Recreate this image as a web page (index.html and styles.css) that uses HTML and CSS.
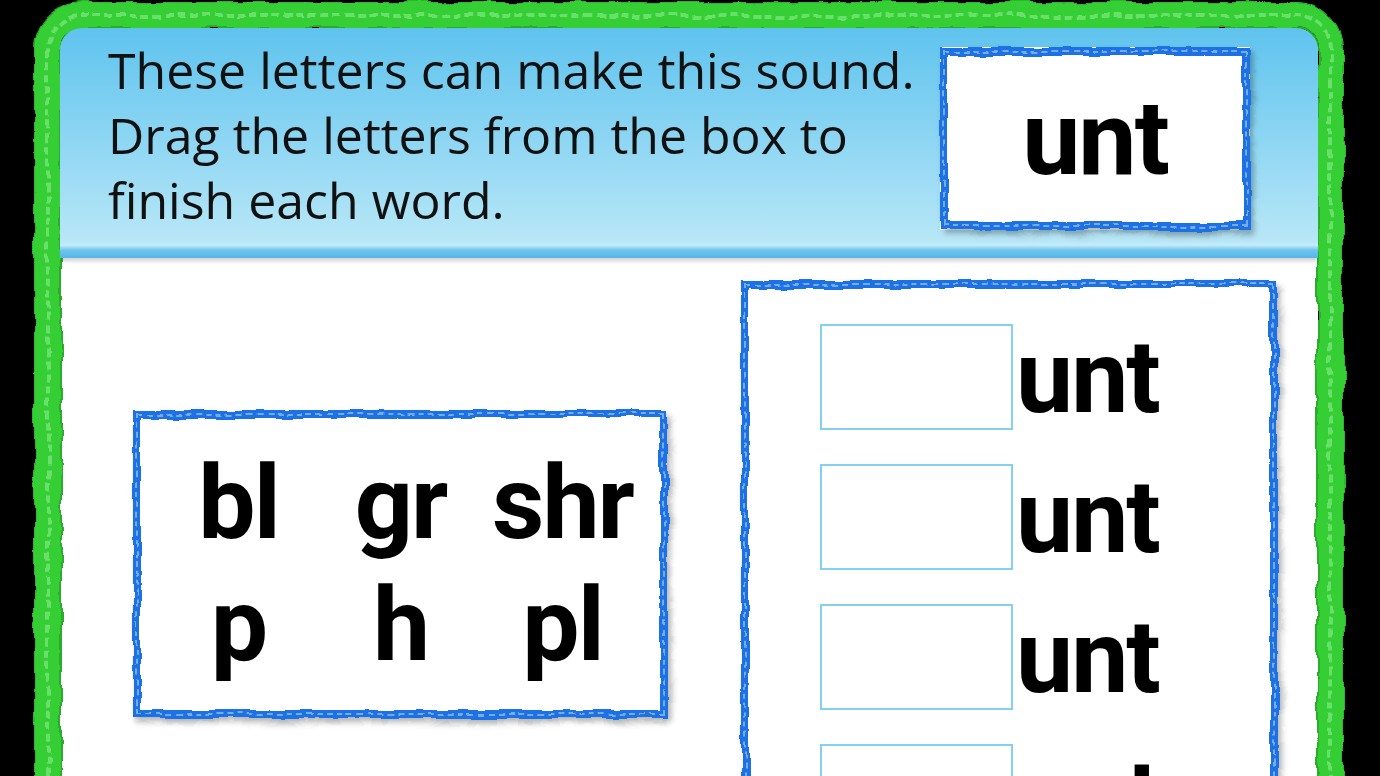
FILE: index.html
```html
<!DOCTYPE html>
<html lang="en">
<head>
<meta charset="utf-8">
<title>unt word family</title>
<link rel="stylesheet" href="styles.css">
</head>
<body>
<svg class="defs" width="0" height="0" aria-hidden="true">
  <filter id="rough" x="-5%" y="-5%" width="110%" height="110%">
    <feTurbulence type="fractalNoise" baseFrequency="0.025 0.03" numOctaves="3" seed="3" result="n"/>
    <feDisplacementMap in="SourceGraphic" in2="n" scale="8" xChannelSelector="R" yChannelSelector="G"/>
  </filter>
  <filter id="roughGreen" x="-5%" y="-5%" width="110%" height="110%">
    <feTurbulence type="fractalNoise" baseFrequency="0.03" numOctaves="3" seed="7" result="n"/>
    <feDisplacementMap in="SourceGraphic" in2="n" scale="9" xChannelSelector="R" yChannelSelector="G"/>
  </filter>
</svg>
<div class="frame">
  <div class="panel">
    <header class="head">
      <p class="instructions">These letters can make this sound.<br>Drag the letters from the box to<br>finish each word.</p>
      <div class="sound-card wavy"><span class="big">unt</span></div>
    </header>
    <main class="work">
      <div class="letters wavy">
        <span class="tile">bl</span>
        <span class="tile">gr</span>
        <span class="tile">shr</span>
        <span class="tile">p</span>
        <span class="tile">h</span>
        <span class="tile">pl</span>
      </div>
      <div class="answers wavy">
        <div class="row"><div class="slot"></div><span class="end">unt</span></div>
        <div class="row"><div class="slot"></div><span class="end">unt</span></div>
        <div class="row"><div class="slot"></div><span class="end">unt</span></div>
        <div class="row"><div class="slot"></div><span class="end">unt</span></div>
      </div>
    </main>
  </div>
</div>
</body>
</html>
```
FILE: styles.css
```css
html, body {
  margin: 0;
  padding: 0;
}
body {
  background: #000;
  width: 1380px;
  height: 776px;
  overflow: hidden;
}
.defs {
  position: absolute;
  width: 0;
  height: 0;
}
.frame {
  position: relative;
  margin: 3px 0 0 35px;
  width: 1308px;
  height: 880px;
  padding: 25px;
  box-sizing: border-box;
}
.frame::before {
  content: "";
  position: absolute;
  inset: 0;
  border: 25px solid #36cf36;
  border-radius: 46px;
  filter: url(#roughGreen);
  outline: 4px dashed rgba(200, 255, 200, 0.35);
  outline-offset: -15px;
  box-shadow: inset 0 0 0 2px #29ad29, 0 0 0 1px #2bb82b;
}
.panel {
  height: 100%;
  background: #fff;
  border-radius: 22px 22px 0 0;
  overflow: hidden;
}
.head {
  height: 230px;
  box-sizing: border-box;
  padding: 10px 68px 0 48px;
  display: flex;
  justify-content: space-between;
  align-items: flex-start;
  background: linear-gradient(to bottom,
    #5fc3ee 0px,
    #b8e7f7 214px,
    #c6edfa 217px,
    #a6dcf4 219px,
    #6fc5ee 222px,
    #56b6e8 230px);
  box-shadow: 0 3px 4px rgba(0, 0, 0, 0.18);
  position: relative;
}
.instructions {
  margin: 0;
  font-family: "Open Sans", "Noto Sans", sans-serif;
  font-size: 50px;
  line-height: 65px;
  color: #111;
}
.wavy {
  position: relative;
  background: #fff;
}
.wavy::before {
  content: "";
  position: absolute;
  inset: 0;
  border: 8px solid #1d72e4;
  filter: url(#rough);
  outline: 2px dashed rgba(255, 255, 255, 0.4);
  outline-offset: -5px;
  box-shadow: 3px 4px 6px rgba(0, 0, 0, 0.3);
}
.sound-card {
  margin-top: 9px;
  width: 310px;
  height: 183px;
  display: flex;
  align-items: center;
  justify-content: center;
}
.big, .tile, .end {
  font-family: Roboto, "Liberation Sans", sans-serif;
  font-weight: 700;
  color: #000;
  letter-spacing: -2px;
}
.big {
  font-size: 104px;
}
.work {
  display: flex;
  justify-content: space-between;
  align-items: flex-start;
  padding: 22px 40px 0 73px;
}
.letters {
  margin-top: 130px;
  width: 535px;
  height: 308px;
  display: grid;
  grid-template-columns: repeat(3, 162px);
  grid-auto-rows: 122px;
  justify-content: center;
  align-content: center;
}
.tile {
  font-size: 102px;
  line-height: 122px;
  text-align: center;
}
.answers {
  width: 537px;
  height: 620px;
  box-sizing: border-box;
  padding: 44px 0 0 79px;
  display: flex;
  flex-direction: column;
  gap: 34px;
}
.row {
  display: flex;
  height: 106px;
}
.slot {
  width: 193px;
  height: 106px;
  box-sizing: border-box;
  border: 2px solid #84cff4;
}
.end {
  font-size: 102px;
  line-height: 106px;
  margin-left: 3px;
}
```
